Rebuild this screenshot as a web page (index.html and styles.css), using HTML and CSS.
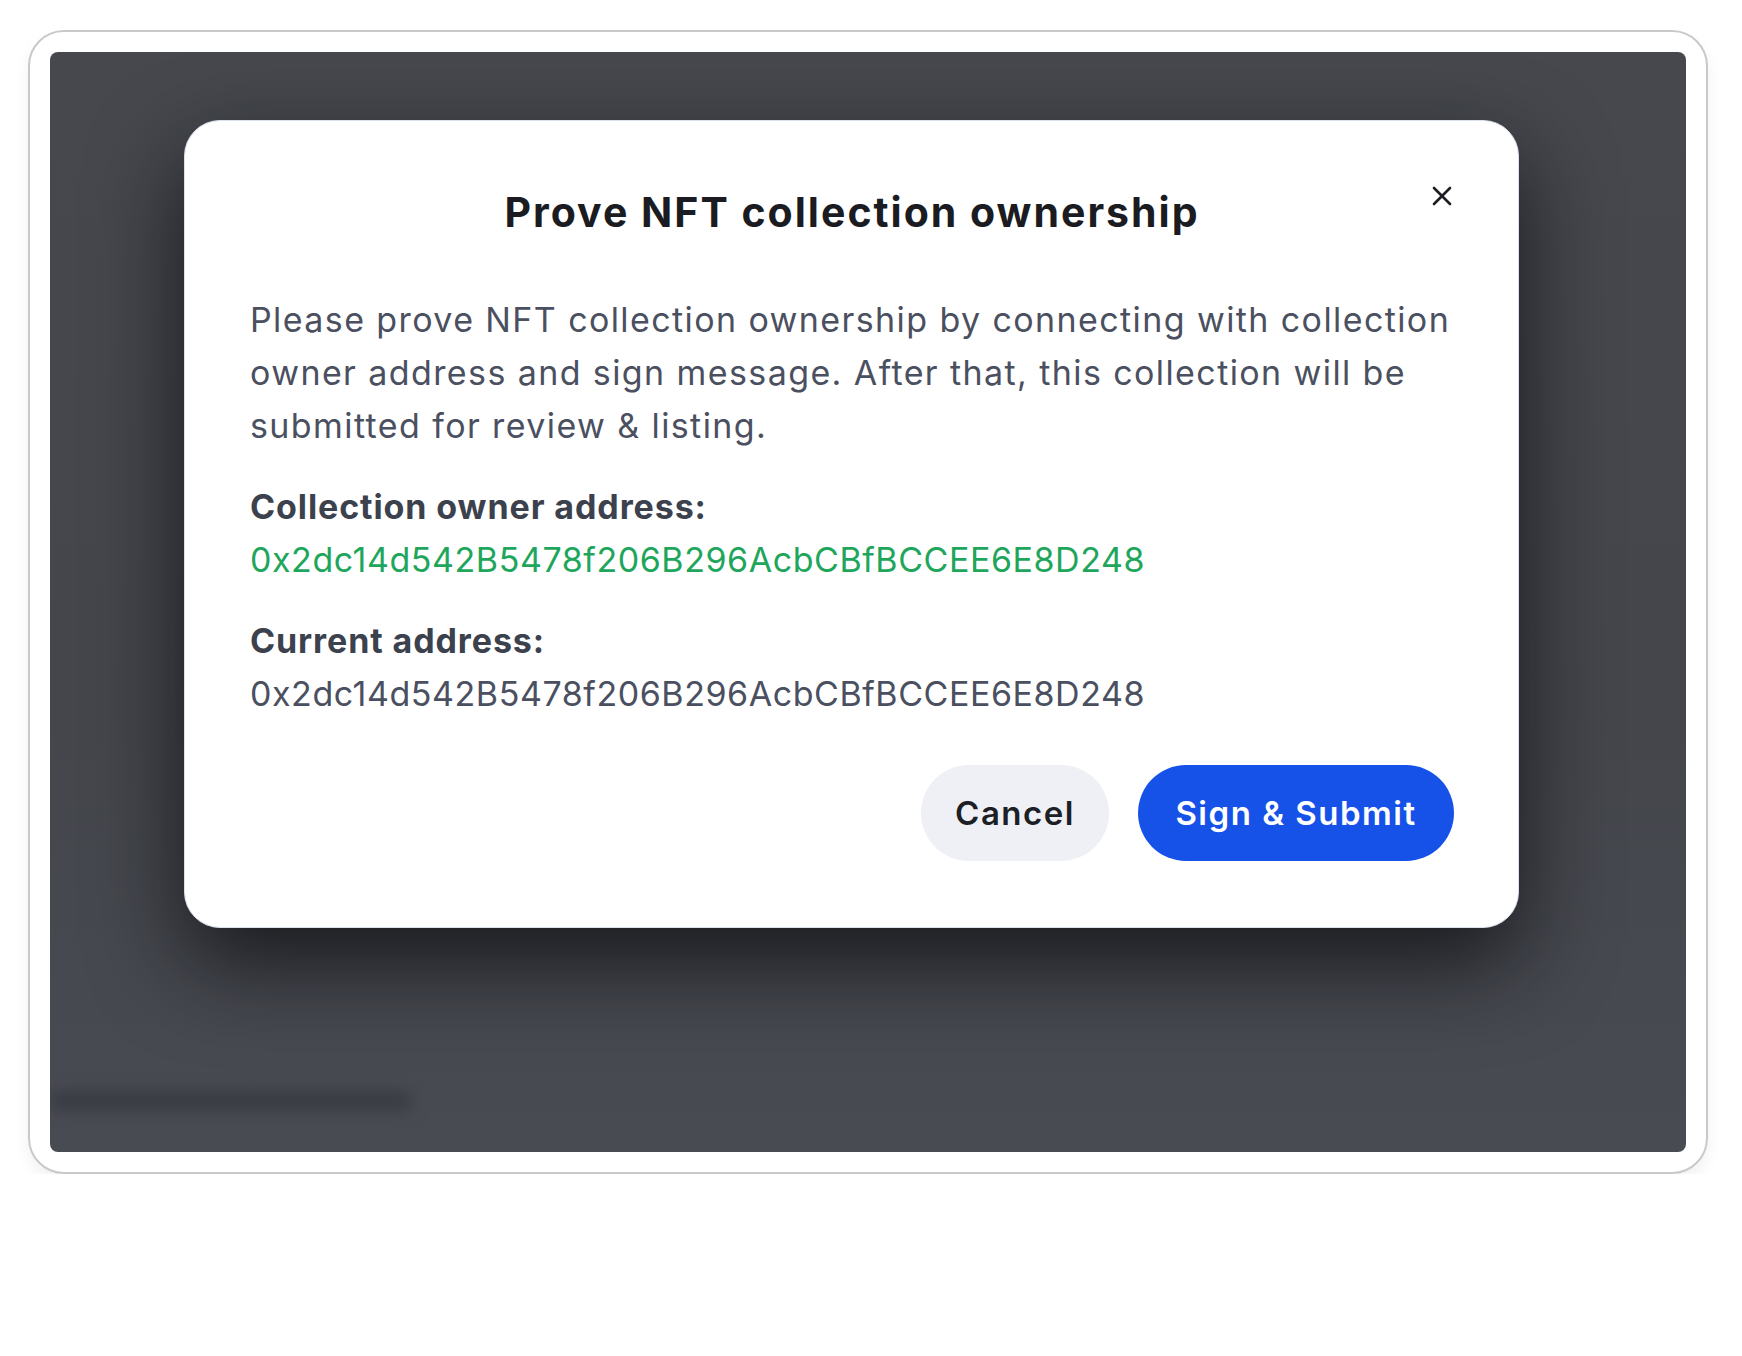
FILE: index.html
```html
<!DOCTYPE html>
<html><head>
	<title>Prove NFT collection ownership</title>
	<link rel="stylesheet" href="styles.css">
</head>
<body>
	<div class="frame">
		<div class="backdrop">
			<div class="blurred-row"></div>
			<div class="modal">
				<button class="close" aria-label="Close">
					<svg width="22" height="22" viewBox="0 0 22 22"><path d="M3 3 L19 19 M19 3 L3 19" stroke="#1c1e24" stroke-width="2.6" stroke-linecap="round"/></svg>
				</button>
				<h2 class="title">Prove NFT collection ownership</h2>
				<p class="intro">Please prove NFT collection ownership by connecting with collection owner address and sign message. After that, this collection will be submitted for review &amp; listing.</p>
				<div class="field">
					<div class="label">Collection owner address:</div>
					<div class="address owner">0x2dc14d542B5478f206B296AcbCBfBCCEE6E8D248</div>
				</div>
				<div class="field">
					<div class="label">Current address:</div>
					<div class="address">0x2dc14d542B5478f206B296AcbCBfBCCEE6E8D248</div>
				</div>
				<div class="actions">
					<button class="btn cancel">Cancel</button>
					<button class="btn submit">Sign &amp; Submit</button>
				</div>
			</div>
		</div>
	</div>
</body>
</html>
```

FILE: styles.css
```css
body {
	margin: 0;
	background-color: #ffffff;
	font-family: Inter, Roboto, sans-serif;
}
.frame {
	margin: 30px 34px 0 28px;
	height: 1100px;
	padding: 20px;
	border: 2px solid #c9c9c9;
	border-radius: 36px;
	box-shadow: 0 8px 16px rgba(0, 0, 0, 0.06);
}
.backdrop {
	position: relative;
	height: 100%;
	padding: 68px 0 0 134px;
	box-sizing: border-box;
	border-radius: 8px;
	background: linear-gradient(180deg, #46484e 0%, #44464c 60%, #494b53 100%);
	overflow: hidden;
}
.blurred-row {
	position: absolute;
	left: 0;
	top: 1040px;
	width: 360px;
	height: 18px;
	background-color: #383a41;
	filter: blur(8px);
}
.modal {
	position: relative;
	width: 1335px;
	box-sizing: border-box;
	padding: 62px 64px 66px 65px;
	background-color: #ffffff;
	border: 1px solid #dbe0ee;
	border-radius: 36px;
	box-shadow: 0 36px 90px rgba(10, 11, 14, 0.75);
}
.close {
	position: absolute;
	top: 64px;
	right: 65px;
	width: 22px;
	height: 22px;
	padding: 0;
	border: none;
	background: none;
}
.close svg {
	display: block;
}
.title {
	margin: 0;
	text-align: center;
	font-size: 41px;
	line-height: 58px;
	font-weight: 700;
	letter-spacing: 2px;
	color: #1a1c22;
}
.intro {
	margin: 52px 0 0 0;
	font-size: 34px;
	line-height: 53px;
	letter-spacing: 1.4px;
	color: #4b5061;
}
.field {
	margin-top: 28px;
	font-size: 34px;
	line-height: 53px;
}
.field + .field {
	margin-top: 28px;
}
.label {
	font-weight: 700;
	letter-spacing: 0.9px;
	color: #3c414e;
}
.address {
	letter-spacing: 0.55px;
	color: #4b5061;
}
.address.owner {
	color: #1ea65c;
}
.actions {
	display: flex;
	justify-content: flex-end;
	gap: 29px;
	margin-top: 45px;
}
.btn {
	height: 96px;
	border: none;
	border-radius: 48px;
	font-family: Inter, Roboto, sans-serif;
	font-size: 33px;
	font-weight: 600;
	letter-spacing: 1.5px;
}
.cancel {
	width: 188px;
	background-color: #eff0f5;
	color: #1d1f26;
}
.submit {
	width: 316px;
	background-color: #1652e8;
	color: #ffffff;
}
```
